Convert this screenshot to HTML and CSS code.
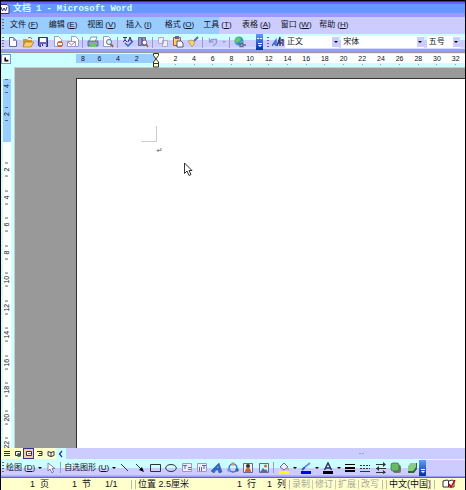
FILE: index.html
```html
<!DOCTYPE html>
<html lang="zh-CN">
<head>
<meta charset="utf-8">
<title>文档 1 - Microsoft Word</title>
<link rel="stylesheet" href="styles.css">
</head>
<body>
<div class="app">
  <header class="titlebar">
    <svg class="appicon" viewBox="0 0 9 12"><path fill="#fff" stroke="#336" d="M-1 1.500h7l2 2v7h-9z"/><path fill="none" stroke="#339" d="M0 4l1.500 4L3 5l1.500 3L6 4"/></svg>
    <h1><span>文档</span><span>1</span><span>-</span><span>Microsoft</span><span>Word</span></h1>
  </header>

  <div class="menurow">
    <i class="grip"></i>
    <nav class="menubar">
      <button>文件<span class="key">(<u>F</u>)</span></button><button>编辑<span class="key">(<u>E</u>)</span></button><button>视图<span class="key">(<u>V</u>)</span></button><button>插入<span class="key">(<u>I</u>)</span></button><button>格式<span class="key">(<u>O</u>)</span></button><button>工具<span class="key">(<u>T</u>)</span></button><button>表格<span class="key">(<u>A</u>)</span></button><button>窗口<span class="key">(<u>W</u>)</span></button><button>帮助<span class="key">(<u>H</u>)</span></button>
    </nav>
  </div>

  <div class="toolbar top">
    <i class="grip"></i>
    <button aria-label="新建"><svg viewBox="0 0 12 12"><path fill="#fff" stroke="#669" d="M2.500 1.500h4l3 3v6h-7z"/><path fill="#99c" d="M6 1l4 4H6z"/></svg></button>
    <button aria-label="打开"><svg viewBox="0 0 12 12"><path fill="#c93" d="M1 3h4l1 1h4v7H1z"/><path fill="#fc6" stroke="#963" stroke-width=".6" d="M3 6h9l-3 5H1z"/><path fill="none" stroke="#963" d="M6 2q3-2 4 1"/></svg></button>
    <button aria-label="保存"><svg viewBox="0 0 12 12"><path fill="#66c" stroke="#336" d="M1.500 1.500h9v9h-8l-1-1z"/><path fill="#fff" d="M3 2h6v4H3z"/><path fill="#ccf" d="M4 8h5v3H4z"/><path fill="#336" d="M5 8h1v2H5z"/></svg></button>
    <button aria-label="权限"><svg viewBox="0 0 12 12"><path fill="#fff" stroke="#99c" d="M2.500.5h4l3 3v7h-7z"/><circle cx="8" cy="8" r="3" fill="#c63"/><path fill="#fff" d="M6 7h4v2H6z"/></svg></button>
    <button aria-label="电子邮件"><svg viewBox="0 0 12 12"><path fill="#fff" stroke="#99c" d="M4.500.5h4l3 3v7h-7z"/><path fill="#fff" stroke="#99c" d="M.5 5.500h8v5h-8z"/><path fill="none" stroke="#c66" d="M1 6l3.500 3L8 6"/></svg></button>
    <i class="sep"></i>
    <button aria-label="打印"><svg viewBox="0 0 12 12"><path fill="#fff" stroke="#669" stroke-width=".7" d="M4 1h6L8 6H2z"/><path fill="#99c" stroke="#366" stroke-width=".8" d="M1 5h10v5H1z"/><path fill="#6c6" d="M3 8h6v3H3z"/></svg></button>
    <button aria-label="打印预览"><svg viewBox="0 0 12 12"><path fill="#fff" stroke="#99c" d="M1.500.5h5l2 2v8h-7z"/><circle cx="7" cy="6" r="2.500" fill="#cff" stroke="#669"/><path stroke="#963" stroke-width="2" d="M9 8l2 3"/></svg></button>
    <i class="sep"></i>
    <button aria-label="拼写"><svg viewBox="0 0 12 12"><path fill="none" stroke="#336" d="M1 1.500h4M3 1v3M1 6l2-2 2 2M6 6l2-5 2 5M7 4h2"/><path fill="none" stroke="#36c" stroke-width="1.500" d="M3 7l3 3 5-5"/></svg></button>
    <button aria-label="信息检索"><svg viewBox="0 0 12 12"><path fill="#99c" stroke="#669" d="M1.500 1.500h3v8h-3zM5.500 1.500h3v8h-3z"/><circle cx="7.500" cy="6.500" r="2.300" fill="#fff" stroke="#669"/><path stroke="#963" stroke-width="1.500" d="M9 8l2 3"/></svg></button>
    <i class="sep"></i>
    <button aria-label="复制"><svg viewBox="0 0 12 12"><path fill="#eef" stroke="#aab" d="M1.500 1.500h5v6h-5zM5.500 4.500h5v6h-5z"/></svg></button>
    <button aria-label="粘贴"><svg viewBox="0 0 12 12"><path fill="#fc6" stroke="#963" d="M1.500 1.500h7v8h-7z"/><path fill="#669" d="M3 0h4v3H3z"/><path fill="#fff" stroke="#336" stroke-width=".8" d="M5 5h4l2 2v4H5z"/></svg></button>
    <button aria-label="格式刷"><svg viewBox="0 0 12 12"><path stroke="#669" stroke-width="2" d="M11 1L7 5"/><path fill="#fc6" stroke="#996" stroke-width=".7" d="M1 5l4-1 3 3-3 4z"/></svg></button>
    <i class="sep"></i>
    <button aria-label="撤消"><svg viewBox="0 0 12 12"><path fill="none" stroke="#99c" stroke-width="1.300" d="M2.500 2v4h4M3 5.500L5 3.500h4.500V7L6 10"/></svg></button>
    <i class="drop faint"></i>
    <i class="sep"></i>
    <button aria-label="超链接"><svg viewBox="0 0 12 12"><circle cx="5" cy="5" r="4.500" fill="#39c"/><path fill="#6c6" d="M3 1l4 1-1 3-4 2-1-3zM6 6l3-1-2 4z"/><path fill="none" stroke="#669" stroke-width="1.300" d="M6 7.500h3v3H6zM9 9h3"/></svg></button>
    <button class="more first" aria-label="工具栏选项"><svg viewBox="0 0 7 16"><path stroke="#fff" d="M1 4.500h2M4 4.500h2M2 9.500h4"/><path fill="#fff" d="M2 11h4l-2 2z"/></svg></button>
    <i class="grip"></i>
    <button aria-label="格式窗格"><svg viewBox="0 0 12 12"><path fill="none" stroke="#36c" stroke-width="1.300" d="M0 10L4 4v6M1 8h3"/><path fill="none" stroke="#336" stroke-width="1.300" d="M5 10L8 1v9M6 7h4M11 3v7M9 4h2"/></svg></button>
    <label class="combo style"><select aria-label="样式"><option>正文</option></select><i class="drop"></i></label>
    <label class="combo font"><select aria-label="字体"><option>宋体</option></select><i class="drop"></i></label>
    <label class="combo size"><select aria-label="字号"><option>五号</option></select><i class="drop"></i></label>
  </div>

  <div class="ruler">
    <button class="tab" aria-label="左对齐制表符"><svg viewBox="0 0 10 10"><path fill="none" stroke="#000" stroke-width="2" d="M4 3v4h4"/></svg></button>
    <div class="scale">
      <div class="margin"><span>8</span><span>6</span><span>4</span><span>2</span></div>
      <div class="measure"><span>2</span><span>4</span><span>6</span><span>8</span><span>10</span><span>12</span><span>14</span><span>16</span><span>18</span><span>20</span><span>22</span><span>24</span><span>26</span><span>28</span><span>30</span><span>32</span></div>
      <svg class="indent" viewBox="0 0 8 16"><path fill="#ffc" stroke="#333" d="M1.500 1.500h5v2L4 7 1.500 3.500zM4 7l2.500 3v5h-5v-5zM1.500 11.500h5"/></svg>
    </div>
  </div>

  <main class="work">
    <div class="vruler">
      <div class="vscale vmargin"><span>4</span><span>2</span></div>
      <div class="vscale vmeasure"><span>2</span><span>4</span><span>6</span><span>8</span><span>10</span><span>12</span><span>14</span><span>16</span><span>18</span><span>20</span><span>22</span></div>
    </div>
    <div class="canvas">
      <article class="page">
        <div class="corner"></div>
        <svg class="para" viewBox="0 0 6 5"><path fill="none" stroke="#888" d="M5 0v2.500H1M2.500 1L1 2.500 2.500 4"/></svg>
        <svg class="pointer" viewBox="0 0 9 15"><path fill="#fff" stroke="#333" d="M.5 1v10.500L3 9l2 4.500 2-1L5 8.500h3z"/></svg>
      </article>
    </div>
  </main>

  <div class="views">
    <button aria-label="普通视图"><svg viewBox="0 0 8 8"><path stroke="#333" d="M1 1.500h6M1 3.500h6M1 5.500h6"/></svg></button>
    <button aria-label="Web版式"><svg viewBox="0 0 8 8"><path fill="#fff" stroke="#333" d="M1.500 1.500h5v4h-5z"/><circle cx="5" cy="5" r="2" fill="#363"/></svg></button>
    <button class="on" aria-label="页面视图"><svg viewBox="0 0 8 8"><path fill="#fff" stroke="#333" d="M1.500 1.500h5v4h-5z"/><path stroke="#969" d="M3 3.500h3"/></svg></button>
    <button aria-label="大纲视图"><svg viewBox="0 0 8 8"><path fill="none" stroke="#333" d="M1 1.500h5v4H2M3 3.500h3"/></svg></button>
    <button aria-label="阅读版式"><svg viewBox="0 0 8 8"><path fill="#fff" stroke="#333" d="M1 1.500l3 1 3-1v4l-3 1-3-1zM4 2v5"/></svg></button>
    <div class="scroll"><button aria-label="向左滚动"><svg viewBox="0 0 8 8"><path fill="none" stroke="#339" stroke-width="1.300" d="M5 1L2.500 4 5 7"/></svg></button><i></i></div>
  </div>

  <div class="toolbar draw">
    <i class="grip"></i>
    <button class="word">绘图<span class="key">(<u>D</u>)</span><i class="drop"></i></button>
    <button class="select" aria-label="选择对象"><svg viewBox="0 0 12 12"><path fill="#fff" stroke="#669" stroke-width=".8" d="M3 1v8l2-2 2 4 1.500-1L7 6.500h3z"/></svg></button>
    <i class="sep"></i>
    <button class="word">自选图形<span class="key">(<u>U</u>)</span><i class="drop"></i></button>
    <div class="tools">
      <button aria-label="直线"><svg viewBox="0 0 12 12"><path stroke="#333" d="M2 2l7 7"/></svg></button>
      <button aria-label="箭头"><svg viewBox="0 0 12 12"><path stroke="#333" d="M2 2l6 6"/><path d="M10 10L5 8l3-3z"/></svg></button>
      <button aria-label="矩形"><svg viewBox="0 0 12 12"><path fill="none" stroke="#333" d="M.5 2.500h10v7H.5z"/></svg></button>
      <button aria-label="椭圆"><svg viewBox="0 0 12 12"><ellipse cx="6" cy="6" rx="5.300" ry="3.500" fill="none" stroke="#333"/></svg></button>
      <button aria-label="文本框"><svg viewBox="0 0 12 12"><path fill="#eef" stroke="#99c" d="M1.500 1.500h9v8h-9z"/><path stroke="#669" d="M2 3.500h4M4 3v4M7 5.500h3M7 7.500h3"/></svg></button>
      <button aria-label="竖排文本框"><svg viewBox="0 0 12 12"><path fill="#eef" stroke="#99c" d="M1.500 1.500h9v8h-9z"/><path stroke="#669" d="M3.500 5v4M5.500 5v4M6 3.500h4M8 3v4"/></svg></button>
      <button aria-label="艺术字"><svg viewBox="0 0 12 12"><path fill="#36c" stroke="#369" stroke-width=".6" d="M0 9l8-8 3 9-3 1-1-3H5l-2 3z"/><path fill="#9cf" d="M6 6l1-2 .5 2z"/></svg></button>
      <button aria-label="组织结构图"><svg viewBox="0 0 12 12"><circle cx="6" cy="6" r="4" fill="none" stroke="#36c" stroke-width="1.300"/><circle cx="6" cy="2" r="1.800" fill="#c96"/><circle cx="2" cy="8" r="1.800" fill="#69c"/><circle cx="10" cy="8" r="1.800" fill="#369"/></svg></button>
      <button aria-label="剪贴画"><svg viewBox="0 0 12 12"><path fill="#eee" stroke="#669" d="M1.500 1.500h9v9h-9z"/><circle cx="6" cy="4" r="2" fill="#333"/><path fill="#c63" d="M3 10q0-4 3-4t3 4z"/></svg></button>
      <button aria-label="图片"><svg viewBox="0 0 12 12"><path fill="#cff" stroke="#669" d="M1.500 1.500h9v9h-9z"/><circle cx="7.500" cy="4" r="1.500" fill="#c63"/><path fill="#669" d="M2 10l3-4 2 2 1-1 2 3z"/></svg></button>
    </div>
    <i class="sep"></i>
    <button aria-label="填充颜色"><svg viewBox="0 0 12 12"><path fill="#eef" stroke="#669" d="M2 5l4-4 4 4-4 3z"/><path fill="#c93" d="M9 5l2 2-1 2z"/><path fill="#ff0" d="M1 9h10v3H1z"/></svg></button>
    <i class="drop"></i>
    <button aria-label="线条颜色"><svg viewBox="0 0 12 12"><path stroke="#369" stroke-width="2" d="M2 8l3-3"/><path stroke="#69c" stroke-width="2" d="M5 5l5-4"/><path fill="#00f" d="M1 9h10v3H1z"/></svg></button>
    <i class="drop"></i>
    <button aria-label="字体颜色"><svg viewBox="0 0 12 12"><path fill="none" stroke="#336" stroke-width="1.500" d="M2.500 8L6 1l3.500 7M4 6h4"/><path d="M1 9h10v3H1z"/></svg></button>
    <i class="drop"></i>
    <div class="tools lines">
      <button aria-label="线型"><svg viewBox="0 0 12 12"><path d="M1 2h10v1H1zM1 5h10v2H1zM1 8h10v2H1z"/></svg></button>
      <button aria-label="虚线线型"><svg viewBox="0 0 12 12"><path stroke="#333" stroke-dasharray="2 1" d="M1 3.500h10M1 6.500h10"/><path stroke="#333" d="M1 9.500h10"/></svg></button>
      <button aria-label="箭头样式"><svg viewBox="0 0 12 12"><path stroke="#333" d="M1 2.500h9M1 6.500h10M1 10.500h9"/><path fill="#333" d="M8 0l3 2.500L8 5zM4 4v5L1 6.500zM8 8l3 2.500L8 12z"/></svg></button>
      <button aria-label="阴影样式"><svg viewBox="0 0 12 12"><rect x="3" y="3" width="8" height="8" rx="2" fill="#777"/><rect x="1" y="1" width="8" height="8" rx="2" fill="#6b6" stroke="#363" stroke-width=".7"/></svg></button>
      <button aria-label="三维效果样式"><svg viewBox="0 0 12 12"><path fill="#363" d="M2 5l3-4h6v6l-3 4H2z"/><path fill="#8c8" d="M2 5l3-4h5v4l-3 4H2z"/></svg></button>
    </div>
    <button class="more" aria-label="绘图工具栏选项"><svg viewBox="0 0 7 16"><path stroke="#fff" d="M2 9.500h4"/><path fill="#fff" d="M2 11h4l-2 2z"/></svg></button>
    <i class="rest"></i>
  </div>

  <footer class="status">
    <span class="pg">1&nbsp; 页</span><span class="sec">1&nbsp; 节</span><span class="of">1/1</span>
    <i class="bars"></i><span class="pos">位置 2.5厘米</span><span class="row">1&nbsp; 行</span><span class="col">1&nbsp; 列</span>
    <i class="bars"></i><span class="mode">录制</span><span class="mode">修订</span><span class="mode">扩展</span><span class="mode">改写</span>
    <i class="bars"></i><span class="lang">中文(中国)</span><i class="bars"></i>
    <svg class="book" viewBox="0 0 14 10"><path fill="#fff" stroke="#333" d="M1 2l4-1 2 1 3-1 2 1v6H1zM6.500 2v6"/><path fill="none" stroke="#c00" stroke-width="1.500" d="M7 5l2 3 4-7"/></svg>
  </footer>
</div>
</body>
</html>
```
FILE: styles.css
```css
* { box-sizing: border-box; }

body {
  margin: 0;
  font: 8px/12px "Liberation Sans", "Noto Sans CJK SC", sans-serif;
  color: #112;
}

.app {
  display: flex;
  flex-direction: column;
  min-height: 100vh;
  border: 1px solid #000;
  background: #ccf;
  overflow: hidden;
}

button {
  display: flex;
  align-items: center;
  justify-content: center;
  padding: 0;
  border: 0;
  background: none;
  color: inherit;
  font: inherit;
  white-space: nowrap;
}

svg { display: block; }

/* Title and menus */

.titlebar {
  display: flex;
  align-items: center;
  height: 16px;
  padding-bottom: 1px;
  border-top: 1px solid #339;
  background: linear-gradient(#66f 0 2px, #69f 2px 11px, #99f 11px);
}

.appicon { width: 9px; height: 12px; }

.titlebar h1 {
  display: flex;
  gap: 5px;
  margin: 0 0 0 3px;
  font: bold 9px/12px "Liberation Mono", "Noto Sans CJK SC", monospace;
  color: #cff;
}

.menurow {
  display: flex;
  align-items: center;
  height: 17px;
  padding: 0 107px 2px 1px;
  background: linear-gradient(90deg, #9cf 218px, #ccf 218px);
}

.menubar {
  flex: 1;
  display: grid;
  grid-template-columns: repeat(9, 1fr);
  margin-left: 5px;
}

.menubar button { justify-content: flex-start; }

.key { margin-left: 2px; }

u { text-underline-offset: 1px; }

/* Toolbars */

.toolbar {
  display: flex;
  align-items: center;
  height: 18px;
  padding: 0 0 2px 1px;
  background: linear-gradient(#cff 6px, #ccf 6px 13px, #cdf 13px 15px, #99f 15px);
}

.toolbar svg { width: 12px; height: 12px; }

.toolbar > button { flex: none; width: 15px; height: 14px; }

.toolbar.draw { height: 19px; background: linear-gradient(#cff 9px, #ccf 9px 16px, #99f 17px 18px, #669 18px); }

.tools { flex: none; display: grid; grid-template-columns: repeat(10, 1fr); width: 154px; }
.lines { grid-template-columns: repeat(5, 1fr); width: 77px; }

.rest { flex: 1; height: 16px; background: #ccf; }

.grip {
  flex: none;
  width: 2px;
  height: 11px;
  margin-right: 1px;
  background: repeating-linear-gradient(#669 0 1px, transparent 1px 3px);
}

.sep { flex: none; width: 1px; height: 11px; margin: 0 2px; background: #99c; }

.drop { flex: none; width: 7px; height: 12px; display: flex; align-items: center; justify-content: center; }
.drop::before { content: ""; border: 2px solid transparent; border-top-color: #000; border-bottom: 0; }
.drop.faint::before { border-top-color: #99c; }

.toolbar > .more { width: 7px; height: 16px; background: linear-gradient(#69f, #039); }
.toolbar .more svg { width: 7px; height: 16px; }
.toolbar > .first { margin: 0 4px 0 9px; }

.combo { display: flex; align-items: center; height: 12px; background: #fff; }
.combo select {
  flex: 1;
  min-width: 0;
  height: 12px;
  padding: 0 2px;
  border: 0;
  appearance: none;
  background: none;
  color: inherit;
  font: inherit;
}
.combo .drop { height: 10px; background: #ccf; }
.style { flex: 54; }
.font { flex: 82; margin-left: 2px; }
.size { flex: 33; margin: 0 5px 0 3px; }

.toolbar > .word { width: auto; margin-left: 1px; }
.word .drop { margin-left: 1px; }

/* Rulers */

.ruler {
  display: flex;
  height: 15px;
  padding-top: 1px;
  border-top: 1px solid #999;
  background: #cff;
  font-size: 7px;
}

.tab { flex: none; width: 10px; height: 10px; border: 1px solid #69c; background: #fff; }
.tab svg { width: 8px; height: 8px; }

.scale { position: relative; flex: 1; display: flex; height: 9px; margin-left: 65px; background: #fff; }
.scale span { flex: 1; text-align: center; line-height: 9px; }
.margin { flex: none; display: flex; width: 80px; padding-right: 10px; background: #9cf; }
.margin span:first-child { flex: 0 0 14px; }
.measure { flex: 1; display: flex; padding-left: 10px; }
.measure span { height: 11px; background: linear-gradient(#999, #999) center bottom / 1px 1px no-repeat; }
.indent { position: absolute; left: 76px; top: -2px; width: 8px; height: 16px; }

/* Document */

.work { flex: 1; display: flex; min-height: 0; background: #cff; }

.vruler { flex: none; width: 13px; height: 381px; padding: 12px 3px 0 2px; overflow: hidden; font-size: 7px; }

.vscale { display: grid; grid-auto-rows: 1fr; }
.vscale span {
  display: flex;
  align-items: center;
  justify-content: center;
  writing-mode: vertical-rl;
  transform: rotate(180deg);
  line-height: 8px;
  background:
    linear-gradient(#666, #666) center 7px / 3px 1px no-repeat,
    linear-gradient(#666, #666) center calc(100% - 7px) / 3px 1px no-repeat;
}
.vmargin { height: 63px; padding-bottom: 14px; background: #9cf; grid-auto-rows: 28px; align-content: end; overflow: hidden; }
.vmeasure { height: 317px; padding-top: 14px; background: #fff; }

.canvas { flex: 1; display: flex; padding: 10px 0 0 61px; border: solid #ccc; border-width: 1px 0 0 1px; background: #999; }

.page { position: relative; flex: 1; padding: 47px 0 0 64px; border: solid #333; border-width: 1px 0 0 1px; background: #fff; }
.corner { width: 16px; height: 16px; border: solid #ccc; border-width: 0 1px 1px 0; }
.para { width: 6px; height: 5px; margin: 6px 0 0 15px; }
.pointer { position: absolute; left: 107px; top: 83px; width: 9px; height: 15px; }

/* View buttons and horizontal scroll bar */

.views { display: flex; height: 11px; background: #ffc; }
.views > button { flex: none; width: 11px; }
.views svg { width: 8px; height: 8px; }
.views > .on { border: 1px solid #339; background: #fc9; }
.scroll { flex: 1; display: flex; align-items: center; background: #ccf; }
.scroll button { width: 10px; height: 11px; background: #cff; }
.scroll i { width: 5px; height: 1px; margin-left: 293px; background: repeating-linear-gradient(90deg, #99c 0 2px, transparent 2px 3px); }

/* Status bar */

.status { display: flex; align-items: center; height: 12px; background: #ffc; font-size: 9px; white-space: nowrap; }
.status span { flex: none; }
.pg { width: 71px; padding-left: 29px; }
.sec { width: 33px; }
.of { width: 26px; }
.bars { flex: none; width: 5px; height: 9px; margin-right: 2px; border: solid #bba; border-width: 0 1px; }
.pos { width: 99px; }
.row { width: 30px; }
.col { width: 18px; }
.status .mode { width: 21px; margin-right: 2px; border-right: 1px solid #cca; line-height: 9px; color: #aa9; }
.status .mode:nth-last-of-type(2) { width: 19px; border: 0; }
.lang { width: 41px; }
.book { width: 14px; height: 10px; margin-left: 5px; }
```
